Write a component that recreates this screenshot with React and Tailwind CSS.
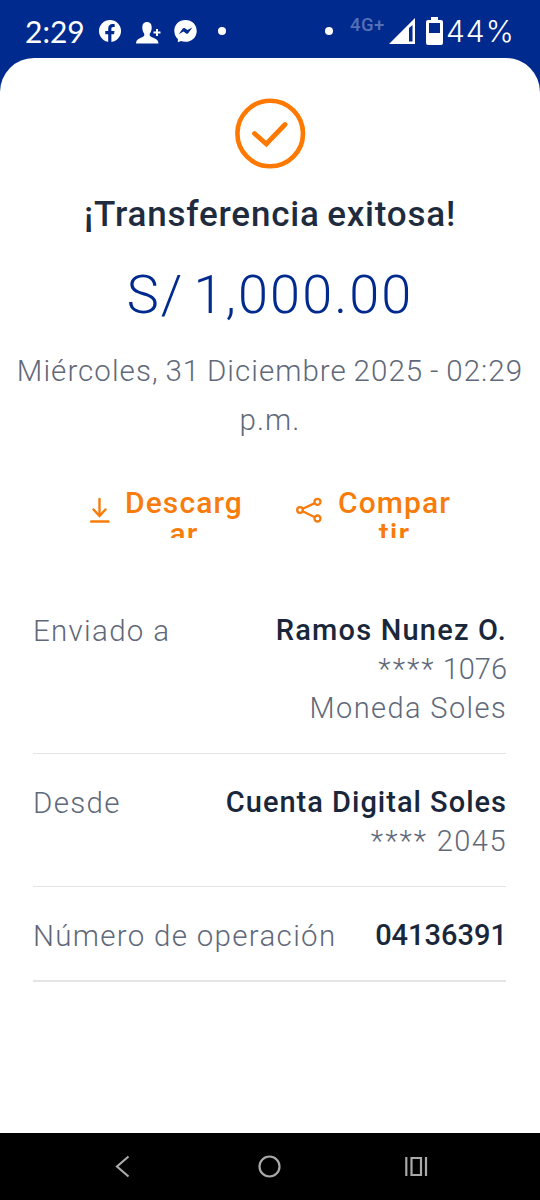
const rows = [
  { label: 'Enviado a', title: 'Ramos Nunez O.', titleClass: 'tracking-[1.2px]', account: '1076', currency: 'Moneda Soles' },
  { label: 'Desde', title: 'Cuenta Digital Soles', titleClass: 'tracking-[1px]', account: '2045', accountClass: 'tracking-[1.5px]' },
  { label: 'Número de operación', title: '04136391', titleClass: 'tracking-[0px]' },
];

function StatusBar() {
  return (
    <header className="h-[58px] flex items-start justify-between pl-[25px] pr-[26px] pt-[13px] text-white font-[Lato,sans-serif]">
      <div className="flex items-center h-9">
        <span className="w-[60px] text-[30px] leading-9 whitespace-nowrap">2:29</span>
        <svg className="ml-[14px]" width="22" height="22" viewBox="0 0 22 22">
          <circle cx="11" cy="11" r="11" fill="#fff" />
          <path d="M9.2 22v-7.8H6.300V11h2.900V8.700c0-3 1.700-4.600 4.300-4.600.9 0 1.700.1 2.200.2v2.600h-1.500c-1.300 0-1.800.8-1.800 1.800V11h3.100l-.5 3.200h-2.600V22z" fill="#002a8d" />
        </svg>
        <svg className="ml-[15px] mt-1" width="25" height="22" viewBox="0 0 25 22" fill="#fff">
          <path d="M11 0c3.300 0 4.700 2.300 4.700 5.500 0 2.500-.7 4.500-1.700 5.800-.4.600-.4 2.200 0 2.700 1.500 1.700 8.500 2.200 8.500 7.500H0c0-5.300 6.500-5.800 8-7.500.4-.5.4-2.100 0-2.700-1-1.300-1.700-3.300-1.700-5.800C6.300 2.300 7.700 0 11 0z" />
          <path d="M20 7h2v2.500h2.500v2H22V14h-2v-2.500h-2.500v-2H20z" />
        </svg>
        <svg className="ml-[13px]" width="23" height="23" viewBox="0 0 23 23">
          <path d="M11.500 0C5 0 .3 4.700.3 10.800c0 3.400 1.400 6.300 3.600 8.300v3.200l3-1.300c1.400.5 2.900.8 4.600.8 6.400 0 11.200-4.700 11.200-10.900S17.900 0 11.500 0z" fill="#fff" />
          <path d="M4.700 14.200l3.900-5.500c.6-.8 1.500-.9 2.300-.4l2.500 1.800 4.900-2.600-3.900 5.600c-.5.8-1.500.9-2.300.4l-2.600-1.900z" fill="#002a8d" />
        </svg>
        <span className="ml-[21px] size-2 rounded-full bg-white" />
      </div>
      <div className="flex items-center h-9">
        <span className="mr-[17px] size-2 rounded-full bg-white" />
        <span className="w-[39px] -mt-3 font-[Roboto,sans-serif] font-medium text-[18.5px] leading-5 tracking-[0.4px] text-[#5570b4] whitespace-nowrap">4G+</span>
        <svg width="27" height="26" viewBox="0 0 27 26">
          <path d="M0 26L26 0v26z" fill="#fff" />
          <path d="M20 10l3.500-3v16.500H20z" fill="#002a8d" />
        </svg>
        <svg className="ml-[10px]" width="17" height="28" viewBox="0 0 17 28">
          <path d="M5 0h7v3h3a2 2 0 0 1 2 2v21a2 2 0 0 1-2 2H2a2 2 0 0 1-2-2V5a2 2 0 0 1 2-2h3z" fill="#fff" />
          <path d="M3 6h11v10H3z" fill="#002a8d" />
        </svg>
        <span className="w-[68px] ml-[3px] font-[Inter,sans-serif] font-light text-[30px] leading-9 tracking-[1px] whitespace-nowrap">44%</span>
      </div>
    </header>
  );
}

function Action({ icon, lines, className }) {
  return (
    <button className={`flex items-start h-[51px] overflow-hidden tracking-[1.1px] ${className}`}>
      {icon}
      <span className="text-center">
        {lines.map(l => <span key={l} className="block whitespace-nowrap">{l}</span>)}
      </span>
    </button>
  );
}

function Row({ row, last }) {
  return (
    <div className={`flex justify-between pt-[29px] pb-[25px] leading-[39px] text-[29px] whitespace-nowrap border-[#e4e4e6] ${last ? 'border-b-2' : 'border-b'}`}>
      <span className="h-[39px] pt-px font-light text-[29.5px] tracking-[1.3px] text-[#5f697a]">{row.label}</span>
      <div className="-mr-[1.5px] text-right font-light text-[#5f697a]">
        <p className={`font-medium text-[#1a273b] ${row.titleClass}`}>{row.title}</p>
        {row.account && (
          <p className={row.accountClass}>
            <span className="tracking-[2px]">****</span> {row.account}
          </p>
        )}
        {row.currency && <p className="tracking-[1.4px]">{row.currency}</p>}
      </div>
    </div>
  );
}

export default function App() {
  return (
    <div className="w-[540px] h-[1200px] flex flex-col overflow-hidden bg-[#002a8d] font-[Roboto,sans-serif]">
      <StatusBar />
      <main className="flex-1 bg-white rounded-t-[34px] pt-10">
        <svg className="mx-auto" width="71" height="71" viewBox="0 0 71 71" fill="none" stroke="#ff7800">
          <circle cx="35.2" cy="35.5" r="32.8" strokeWidth="4.6" />
          <path d="M19.500 35.500l11.800 10.500L50 26.500" strokeWidth="4.8" strokeLinecap="round" />
        </svg>
        <h1 className="mt-[22px] text-center font-medium text-[35px] leading-[48px] tracking-[0.8px] [word-spacing:-2px] text-[#1f2c40] whitespace-nowrap">¡Transferencia exitosa!</h1>
        <p className="mt-5 text-center font-light text-[54px] leading-[72px] tracking-[2.1px] [word-spacing:-6px] text-[#002a8d]">S/ 1,000.00</p>
        <p className="mt-4 text-center font-light text-[29.5px] leading-[49px] tracking-[1.05px] [word-spacing:-1.5px] text-[#5f697a] whitespace-nowrap">
          Miércoles, 31 Diciembre 2025 - 02:29<br />p.m.
        </p>

        <div className="mt-[42px] flex pl-[90px] text-[30px] leading-[31px] font-medium text-[#f77c0c]">
          <Action
            className="w-[206px]"
            lines={['Descarg', 'ar']}
            icon={
              <svg className="mt-[10px] mr-[15px] shrink-0" width="20" height="27" viewBox="0 0 20 27" fill="none" stroke="currentColor" strokeWidth="2.4" strokeLinecap="round">
                <path d="M9.5 2v16.500M3.500 12.500l6 6.500 6-6.500M1 24.500h17.500" />
              </svg>
            }
          />
          <Action
            lines={['Compar', 'tir']}
            icon={
              <svg className="mt-[10px] mr-[15px] shrink-0" width="27" height="27" viewBox="0 0 27 27" fill="none" stroke="currentColor" strokeWidth="2.3">
                <circle cx="4" cy="13" r="2.8" />
                <circle cx="21.5" cy="4.8" r="3" />
                <circle cx="21.5" cy="21.5" r="3" />
                <path d="M6.700 11.700l12.100-5.600M6.700 14.300l12.100 5.900" />
              </svg>
            }
          />
        </div>

        <section className="mt-11 ml-[33px] mr-[34.5px]">
          {rows.map((r, i) => <Row key={r.label} row={r} last={i === rows.length - 1} />)}
        </section>
      </main>
      <nav className="h-[67px] bg-black">
        <svg width="540" height="67" viewBox="0 0 540 67" fill="none" stroke="#a9a9a9" strokeWidth="2.2">
          <path d="M128.500 23.500l-11.500 10 11.500 10" />
          <circle cx="269.5" cy="33.5" r="10" />
          <path d="M406.300 24v19M426 24v19M411.500 25h9.500v17h-9.500z" />
        </svg>
      </nav>
    </div>
  );
}
